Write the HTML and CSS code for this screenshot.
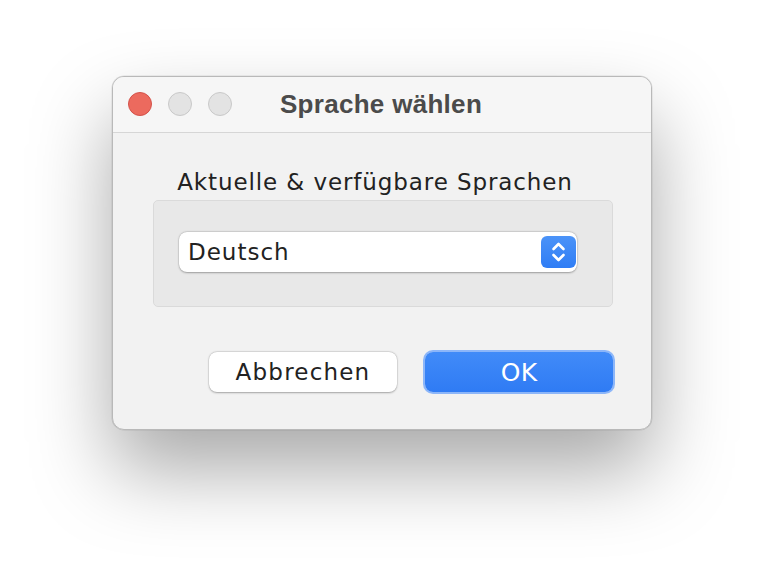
FILE: index.html
```html
<!DOCTYPE html>
<html lang="de">
<head>
  <meta charset="UTF-8">
  <meta name="viewport" content="width=device-width, initial-scale=1.0">
  <title>Sprache wählen</title>
  <link rel="stylesheet" href="styles.css">
</head>
<body>
  <div class="stage">
    <div class="window">
      <div class="titlebar">
        <div class="lights">
          <span class="light close"></span>
          <span class="light"></span>
          <span class="light"></span>
        </div>
        <div class="title">Sprache wählen</div>
      </div>
      <div class="content">
        <div class="label">Aktuelle &amp; verfügbare Sprachen</div>
        <div class="group">
          <div class="select">
            <span class="value">Deutsch</span>
            <span class="stepper">
              <svg width="35" height="32" viewBox="0 0 35 32">
                <path d="M12.5 13 L17.5 8 L22.5 13" fill="none" stroke="#fff" stroke-width="2.6" stroke-linecap="round" stroke-linejoin="round"/>
                <path d="M12.5 19 L17.5 24 L22.5 19" fill="none" stroke="#fff" stroke-width="2.6" stroke-linecap="round" stroke-linejoin="round"/>
              </svg>
            </span>
          </div>
        </div>
        <div class="buttons">
          <button class="btn">Abbrechen</button>
          <button class="btn primary">OK</button>
        </div>
      </div>
    </div>
  </div>
</body>
</html>
```

FILE: styles.css
```css
* {
  box-sizing: border-box;
}
body {
  margin: 0;
  background: #fff;
  font-family: "DejaVu Sans", Verdana, sans-serif;
}
.stage {
  min-height: 100vh;
  padding: 76px 0 0 112px;
}
.window {
  width: 540px;
  height: 354px;
  background: #f2f2f2;
  border: 1px solid #b9b9b9;
  border-radius: 12px;
  overflow: hidden;
  box-shadow: 0 40px 80px rgba(0, 0, 0, 0.34), 0 0 0 0.5px rgba(0, 0, 0, 0.1);
}
.titlebar {
  position: relative;
  height: 56px;
  background: #f6f6f6;
  border-bottom: 1px solid #d6d6d6;
  display: flex;
  align-items: center;
  justify-content: center;
}
.lights {
  position: absolute;
  left: 15px;
  top: 15px;
  display: flex;
  gap: 16px;
}
.light {
  width: 24px;
  height: 24px;
  border-radius: 50%;
  background: #e3e3e3;
  border: 1px solid #c9c9c9;
}
.light.close {
  background: #ec6a5e;
  border-color: #d4524a;
}
.title {
  font-family: "Liberation Sans", Arial, sans-serif;
  font-weight: bold;
  font-size: 26px;
  letter-spacing: 0.3px;
  color: #4b4b4b;
  margin-left: -2px;
}
.content {
  display: flex;
  flex-direction: column;
  padding: 35px 38px 0 40px;
}
.label {
  font-size: 23px;
  letter-spacing: 0.9px;
  color: #222;
  text-align: center;
  line-height: 28px;
  margin: 0 0 4px -16px;
}
.group {
  height: 107px;
  background: #e8e8e8;
  border: 1px solid #dadada;
  border-radius: 5px;
  padding: 31px 35px 0 25px;
}
.select {
  height: 40px;
  background: #fff;
  border-radius: 8px;
  box-shadow: 0 0.5px 2px rgba(0, 0, 0, 0.3), 0 0 0 0.5px rgba(0, 0, 0, 0.08);
  display: flex;
  align-items: center;
  justify-content: space-between;
  padding: 0 1px 0 9px;
}
.value {
  font-size: 23px;
  letter-spacing: 1px;
  color: #222;
}
.stepper {
  width: 35px;
  height: 32px;
  border-radius: 6px;
  background: linear-gradient(#4b93f8, #2f7df5);
  display: flex;
}
.buttons {
  display: flex;
  justify-content: flex-end;
  gap: 28px;
  margin-top: 45px;
}
.btn {
  width: 188px;
  height: 40px;
  border: none;
  border-radius: 8px;
  background: #fff;
  font-family: "DejaVu Sans", Verdana, sans-serif;
  font-size: 23px;
  letter-spacing: 1.2px;
  color: #222;
  box-shadow: 0 0.5px 2px rgba(0, 0, 0, 0.3), 0 0 0 0.5px rgba(0, 0, 0, 0.08);
  padding: 0;
}
.btn.primary {
  background: linear-gradient(#418bf8, #2f7bf4);
  color: #fff;
  font-size: 25px;
  letter-spacing: 0.3px;
  box-shadow: 0 0 0 2px #8cb6f9;
}
```
